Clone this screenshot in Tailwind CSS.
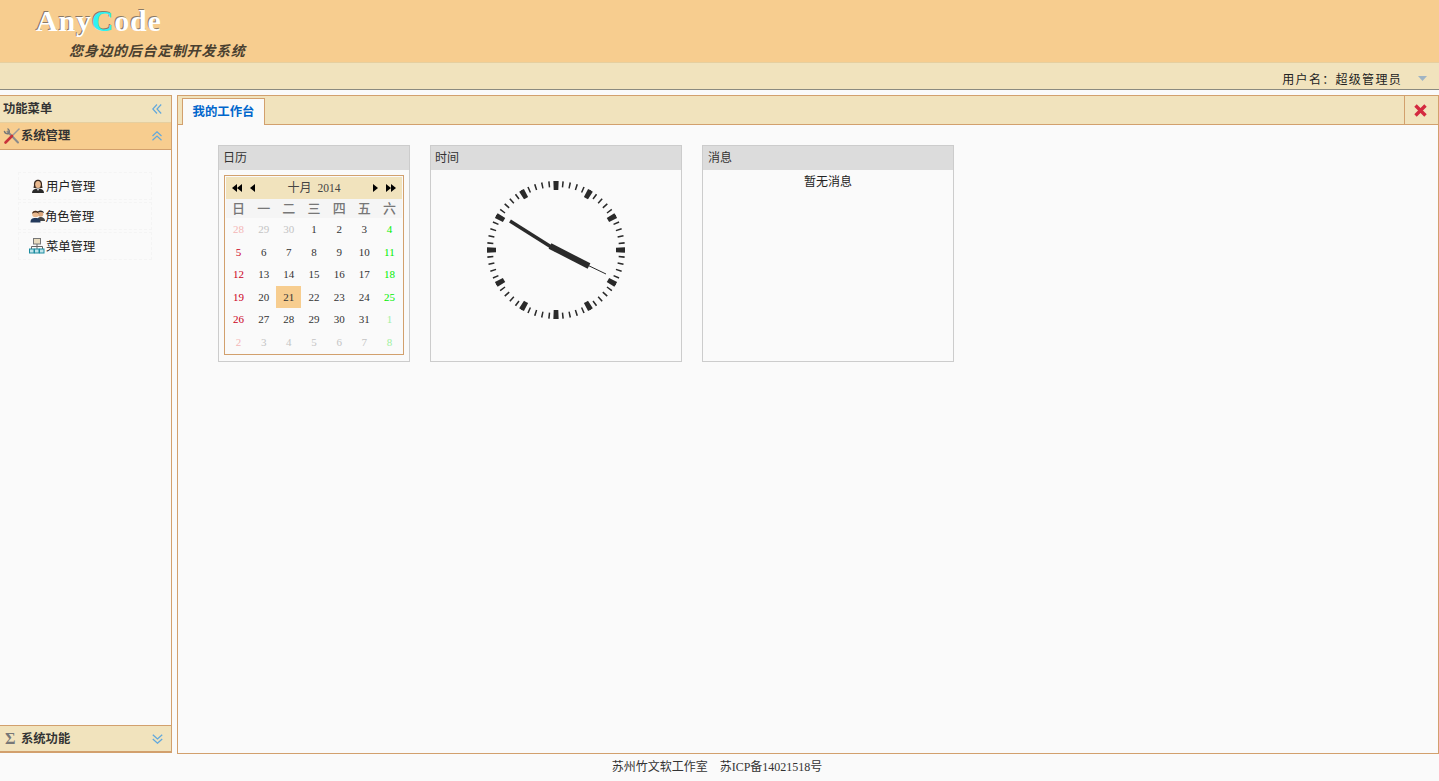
<!DOCTYPE html>
<html lang="zh-CN">
<head>
    <meta charset="UTF-8">
    <title>AnyCode</title>
    <script src="https://cdn.jsdelivr.net/npm/@tailwindcss/browser@4"></script>
</head>
<body class="bg-[#fafafa] h-[781px] w-[1439px] overflow-hidden flex flex-col text-[12px] text-[#222] font-['Liberation_Serif','Noto_Sans_CJK_SC',serif]">
    <!-- Header -->
    <header class="h-[63px] shrink-0 bg-[#f7cd8f] border-b border-[#e6cf9f] pl-[36px] flex flex-col">
        <div class="h-[40px] pt-[2px] text-[30px] leading-[38px] font-bold tracking-[0.8px] text-white [text-shadow:-1px_-1px_0_#8a7a68]">Any<span class="text-[#2ff2f2]">C</span>ode</div>
        <div class="pl-[33px] text-[14px] leading-[20px] italic font-bold tracking-[0.7px] text-[#4a4030] font-['Noto_Sans_CJK_SC',sans-serif]">您身边的后台定制开发系统</div>
    </header>

    <!-- User bar -->
    <div class="h-[27px] shrink-0 bg-[#f1e3bd] border-b border-[#8a8a80] flex items-center justify-end pt-[5px]">
        <span class="tracking-[1.3px] font-['Noto_Sans_CJK_SC',sans-serif]">用户名：超级管理员</span>
        <svg class="ml-[16px] mr-[12px]" width="9" height="5" viewBox="0 0 9 5"><path d="M0 0h9L4.500 5z" fill="#9fb4c4"/></svg>
    </div>

    <!-- Body -->
    <div class="flex-1 flex pt-[5px] min-h-0 font-['Noto_Sans_CJK_SC',sans-serif]">
        <!-- Sidebar -->
        <aside class="w-[172px] shrink-0 h-[658px] border-t border-r border-[#d2a06d] border-b-2 flex flex-col">
            <div class="h-[27px] shrink-0 bg-[#f1e3bd] flex items-center justify-between pl-[3px] pr-[9px] border-b border-[#e6cf9f]">
                <span class="text-[12.3px] font-bold text-[#333] mb-[2px]">功能菜单</span>
                <svg width="10" height="10" viewBox="0 0 10 10" fill="none" stroke="#62a8dc" stroke-width="1.2"><path d="M5 .5.8 5 5 9.500M9.200.5 5 5l4.200 4.500"/></svg>
            </div>
            <div class="h-[27px] shrink-0 bg-[#f7cd8f] border-b border-[#d2a06d] flex items-center justify-between pl-[3px] pr-[9px] pb-[1px]">
                <span class="flex items-center text-[12.3px] font-bold text-[#333]">
                    <svg width="18" height="18" viewBox="0 0 18 18" fill="none" stroke-linecap="round">
                        <path d="M4.500 4.500 15 15.500" stroke="#8a8a8a" stroke-width="2"/>
                        <path d="M1.500 4.500A3 3 0 0 0 5.500 6.500 3 3 0 0 0 5 2" stroke="#777" stroke-width="1.500"/>
                        <path d="M10 8 16 2" stroke="#999" stroke-width="1.500"/>
                        <path d="M2.500 15.500 9 9" stroke="#c9323a" stroke-width="2.600"/>
                    </svg>
                    系统管理
                </span>
                <svg width="10" height="10" viewBox="0 0 10 10" fill="none" stroke="#62a8dc" stroke-width="1.2"><path d="M.5 5 5 .8 9.500 5M.5 9.200 5 5l4.500 4.200"/></svg>
            </div>
            <nav class="flex-1 pt-[22px] pl-[18px] flex flex-col gap-[2px]">
                <a class="w-[134px] h-[28px] border border-dashed border-[#f4f4f4] flex items-center pl-[12px] text-[12.3px]">
                    <svg class="mr-[1px]" width="14" height="16" viewBox="0 0 14 16"><path d="M1 15c0-3 2-4.500 6-4.500s6 1.500 6 4.500z" fill="#2a2a2a"/><path d="M3 7C2 0 12 0 11 7l.5 3h-9z" fill="#3a2a20"/><ellipse cx="7" cy="6.500" rx="2.800" ry="3.500" fill="#e9b98f"/><path d="M6 11h2l-1 2z" fill="#eee"/></svg>
                    用户管理
                </a>
                <a class="w-[134px] h-[28px] border border-dashed border-[#f4f4f4] flex items-center pl-[11px] text-[12.3px]">
                    <svg width="15" height="16" viewBox="0 0 15 16"><circle cx="10.500" cy="6" r="2.800" fill="#d9a67c"/><path d="M7 5c0-3.500 7-3.500 7 0-2-1.500-5-1.500-7 0z" fill="#2a2a2a"/><path d="M7 13c0-3 1.500-4 3.500-4s4.500 1 4.500 4z" fill="#444"/><circle cx="5.500" cy="6" r="3.300" fill="#e9b98f"/><path d="M2 6C2 1.500 9 1.500 9 6 7.500 4 3.500 4 2 6z" fill="#4a3020"/><path d="M.5 14.500c0-3.500 1.500-4.500 5-4.500s5 1 5 4.500z" fill="#243a5c"/></svg>
                    角色管理
                </a>
                <a class="w-[134px] h-[28px] border border-dashed border-[#f4f4f4] flex items-center pl-[10px] text-[12.3px]">
                    <svg class="mr-[1px]" width="16" height="16" viewBox="0 0 16 16" fill="none"><rect x="4.500" y=".5" width="7" height="5.500" fill="#e8dcc0" stroke="#777"/><path d="M8 6v5M2.500 11V8.500h11V11" stroke="#666"/><rect x=".5" y="11" width="4.500" height="4" fill="#bfe3ea" stroke="#1c8ca0"/><rect x="5.500" y="11" width="4.500" height="4" fill="#bfe3ea" stroke="#1c8ca0"/><rect x="10.500" y="11" width="4.500" height="4" fill="#bfe3ea" stroke="#1c8ca0"/></svg>
                    菜单管理
                </a>
            </nav>
            <div class="h-[26px] shrink-0 bg-[#f1e3bd] border-t border-[#d2a06d] flex items-center justify-between pl-[5px] pr-[8px]">
                <span class="flex items-center text-[12.3px] font-bold text-[#333]">
                    <span class="w-[16px] font-['Liberation_Serif',serif] text-[#777] text-[16px] leading-[16px]">Σ</span>系统功能
                </span>
                <svg width="11" height="10" viewBox="0 0 11 10" fill="none" stroke="#62a8dc" stroke-width="1.3"><path d="M.8.8 5.500 5l4.700-4.200M.8 5 5.500 9.200 10.200 5"/></svg>
            </div>
        </aside>

        <!-- Main -->
        <main class="ml-[5px] w-[1262px] h-[659px] border border-[#d2a06d] flex flex-col">
            <div class="h-[29px] shrink-0 bg-[#f1e3bd] border-b border-[#d2a06d] flex justify-between pl-[4px]">
                <div class="mt-[2px] w-[83px] h-[27px] pb-[2px] bg-[#fafafa] border border-b-0 border-[#d2a06d] flex items-center justify-center text-[12.4px] font-bold text-[#0066cc]">我的工作台</div>
                <button class="w-[34px] h-[28px] pr-[2px] border-l border-[#d2a06d] flex items-center justify-center">
                    <svg width="13" height="13" viewBox="0 0 13 13" stroke="#d42a40" stroke-width="3.400"><path d="M1.500 1.500l10 10M11.500 1.500l-10 10"/></svg>
                </button>
            </div>

            <!-- Portlets -->
            <div class="flex gap-[20px] pt-[20px] pl-[40px]">
                <section class="w-[192px] h-[217px] border border-[#cccccc]">
                    <h3 class="h-[24px] bg-[#dcdcdc] pl-[4px] leading-[22px] text-[12px] text-[#333]">日历</h3>
                    <div class="ml-[5px] mt-[5px] w-[180px] h-[180px] border border-[#d2a06d] p-[1px] font-['Liberation_Serif','Noto_Sans_CJK_SC',serif]">
                        <div class="h-[22px] bg-[#f1e3bd] flex items-center justify-between px-[6px]">
                            <span class="flex gap-[8px] items-center">
                                <svg width="10" height="8" viewBox="0 0 10 8"><path d="M5 0v8L0 4zM10 0v8L5 4z" fill="#000"/></svg>
                                <svg width="5" height="8" viewBox="0 0 5 8"><path d="M5 0v8L0 4z" fill="#000"/></svg>
                            </span>
                            <span class="text-[11.5px] text-[#444]"><span class="text-[12px]">十月</span><span class="ml-[6px]">2014</span></span>
                            <span class="flex gap-[8px] items-center">
                                <svg width="5" height="8" viewBox="0 0 5 8"><path d="M0 0v8l5-4z" fill="#000"/></svg>
                                <svg width="10" height="8" viewBox="0 0 10 8"><path d="M0 0v8l5-4zM5 0v8l5-4z" fill="#000"/></svg>
                            </span>
                        </div>
                        <div class="h-[19px] bg-[#f5f5f5] grid grid-cols-7 text-center text-[13px] leading-[19px] font-medium text-[#777]">
                            <span>日</span><span>一</span><span>二</span><span>三</span><span>四</span><span>五</span><span>六</span>
                        </div>
                        <div class="h-[135px] grid grid-cols-7 grid-rows-6 items-center text-center text-[11px] text-[#333]">
                            <span class="text-[#f4b6b6]">28</span><span class="text-[#c4c4c4]">29</span><span class="text-[#c4c4c4]">30</span><span>1</span><span>2</span><span>3</span><span class="text-[#00ee00]">4</span>
                            <span class="text-[#cc0022]">5</span><span>6</span><span>7</span><span>8</span><span>9</span><span>10</span><span class="text-[#00ee00]">11</span>
                            <span class="text-[#cc0022]">12</span><span>13</span><span>14</span><span>15</span><span>16</span><span>17</span><span class="text-[#00ee00]">18</span>
                            <span class="text-[#cc0022]">19</span><span>20</span><span class="self-stretch leading-[22px] bg-[#f7cd8f]">21</span><span>22</span><span>23</span><span>24</span><span class="text-[#00ee00]">25</span>
                            <span class="text-[#cc0022]">26</span><span>27</span><span>28</span><span>29</span><span>30</span><span>31</span><span class="text-[#a0f0a0]">1</span>
                            <span class="text-[#f4b6b6]">2</span><span class="text-[#c4c4c4]">3</span><span class="text-[#c4c4c4]">4</span><span class="text-[#c4c4c4]">5</span><span class="text-[#c4c4c4]">6</span><span class="text-[#c4c4c4]">7</span><span class="text-[#a0f0a0]">8</span>
                        </div>
                    </div>
                </section>
                <section class="w-[252px] h-[217px] border border-[#cccccc]">
                    <h3 class="h-[24px] bg-[#dcdcdc] pl-[4px] leading-[22px] text-[12px] text-[#333]">时间</h3>
                    <svg class="block mx-auto" width="150" height="150" viewBox="0 0 150 150" fill="none">
                        <g transform="translate(75 80)" stroke="#2a2a2a">
                            <circle r="66" stroke-width="6" pathLength="60" stroke-dasharray="0.22 0.78" stroke-dashoffset="0.11"/>
                            <circle r="64.500" stroke-width="9" pathLength="12" stroke-dasharray="0.15 0.85" stroke-dashoffset="0.075"/>
                            <path d="M0 0 L-46 -29" stroke-width="3.500"/>
                            <path d="M-6 -4 L33 16" stroke-width="6"/>
                            <path d="M0 0 L50 24" stroke-width="1"/>
                        </g>
                    </svg>
                </section>
                <section class="w-[252px] h-[217px] border border-[#cccccc]">
                    <h3 class="h-[24px] bg-[#dcdcdc] pl-[5px] leading-[22px] text-[12px] text-[#333]">消息</h3>
                    <p class="text-center text-[12px] leading-[21px]">暂无消息</p>
                </section>
            </div>
        </main>
    </div>

    <!-- Footer -->
    <footer class="h-[27px] shrink-0 flex items-center justify-center text-[12px] text-[#333] pb-[2px] pr-[5px] font-['Liberation_Serif','Noto_Sans_CJK_SC',serif]">
        苏州竹文软工作室<span class="ml-[12px]">苏ICP备14021518号</span>
    </footer>
</body>
</html>
